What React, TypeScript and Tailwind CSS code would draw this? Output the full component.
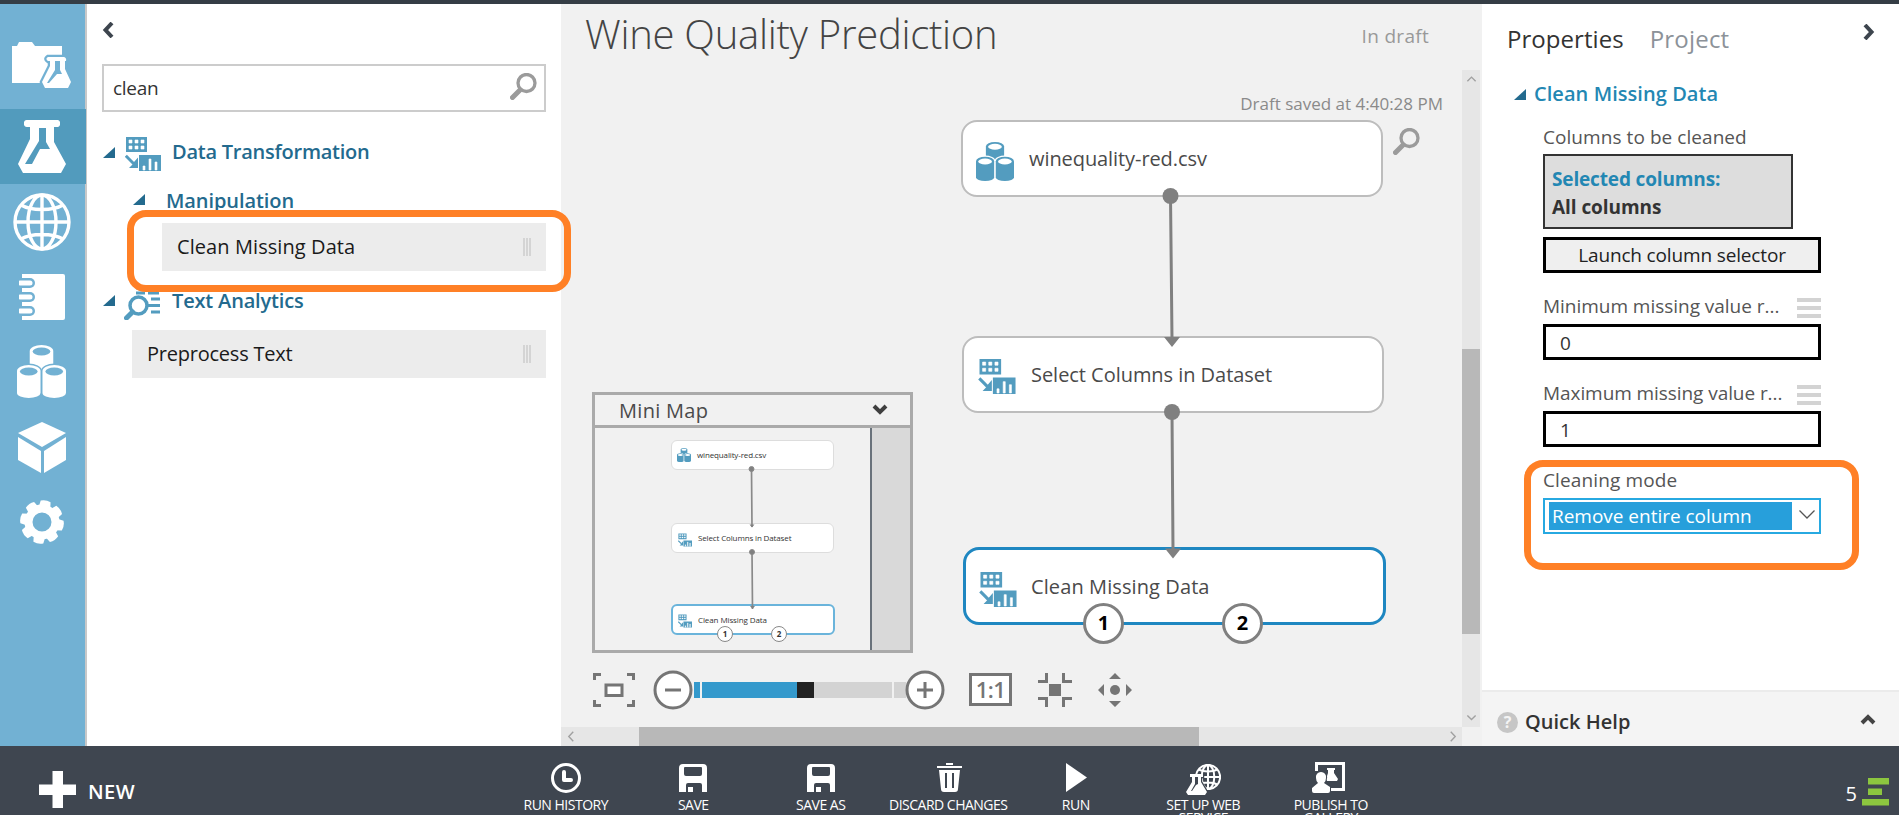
import type { ReactNode } from "react";

type IconProps = { className?: string };

function Flask({ className = "" }: IconProps) {
  return (
    <svg viewBox="0 0 48 53" className={className} fill="currentColor">
      <path
        fillRule="evenodd"
        d="M9 0h31a3 3 0 0 1 2 2v3a3 3 0 0 1-2 2h-4v15l12 22-5 9H5l-5-9 12-25V7H9a3 3 0 0 1-3-2V2a3 3 0 0 1 3-2ZM21 8v13L7 44h7l8-15h10l-4-7V8Z"
      />
    </svg>
  );
}

function FolderFlask() {
  return (
    <svg viewBox="0 0 60 48" className="mb-3 h-12 w-[60px]">
      <path d="M0 4h5l2-4h13l3 4h27v37H0Z" fill="#fff" />
      <path
        d="M35 15h17a3 3 0 0 1 2 4h-1v8l6 13-3 6H33l-3-6 8-16v-5h-2c-3-2-1-4 1-4Z"
        fill="#fff"
        stroke="#72b1d3"
        strokeWidth="4.500"
        paintOrder="stroke"
      />
      <path d="M43 19h5v9l2 4h-5l-8 9h-2l8-13Z" fill="#72b1d3" />
    </svg>
  );
}

function Globe({ className = "", width = 3.4 }: IconProps & { width?: number }) {
  return (
    <svg viewBox="0 0 58 58" className={className} fill="none" stroke="currentColor" strokeWidth={width}>
      <circle cx="29" cy="29" r="27" />
      <ellipse cx="29" cy="29" rx="14" ry="27" />
      <path d="M29 2v54M2 29h54M8 12c10 6 32 6 42 0M8 46c10-6 32-6 42 0" />
    </svg>
  );
}

function Notebook() {
  return (
    <svg viewBox="0 0 46 46" className="h-[46px] w-[46px]">
      <path d="M3 0h41q2 0 2 2v42q0 2-2 2H3Z" fill="#fff" />
      {[9, 23, 37].map((y) => (
        <g key={y}>
          <path d={`M0 ${y}h11`} stroke="#72b1d3" strokeWidth="10" />
          <circle cx="11" cy={y} r="5" fill="#72b1d3" />
          <path d={`M1 ${y}h10`} stroke="#fff" strokeWidth="5" strokeLinecap="round" />
        </g>
      ))}
    </svg>
  );
}

function Cylinders({ className = "", gap = "#fff" }: IconProps & { gap?: string }) {
  const can = (x: number, y: number, h: number) => (
    <g key={`${x}-${y}`}>
      <path
        d={`M${x} ${y + 6}a12 6 0 0 1 24 0v${h}a12 5 0 0 1-24 0Z`}
        fill="currentColor"
        stroke={gap}
        strokeWidth="3"
        paintOrder="stroke"
      />
      <ellipse cx={x + 12} cy={y + 6.5} rx="9" ry="4" fill={gap} />
    </g>
  );
  return (
    <svg viewBox="0 0 50 53" className={className} preserveAspectRatio="none">
      {can(13, 0, 16)}
      {can(0, 20, 22)}
      {can(26, 20, 22)}
    </svg>
  );
}

function Cube() {
  return (
    <svg viewBox="0 0 48 51" className="mt-0.5 h-[51px] w-12" fill="#fff">
      <path d="M24 0 48 11 24 25 0 11Z" />
      <path d="M0 15 23 29v22L0 38Z" />
      <path d="M48 15 26 29v22l22-13Z" />
    </svg>
  );
}

function Gear() {
  return (
    <svg viewBox="-22 -22 44 44" className="h-[44px] w-[44px]" fill="#fff">
      <g transform="rotate(10)">
        {[0, 45, 90, 135, 180, 225, 270, 315].map((a) => (
          <path key={a} transform={`rotate(${a})`} d="M-5-21q5-2 10 0l1 8H-6Z" />
        ))}
      </g>
      <circle r="13.500" fill="none" stroke="#fff" strokeWidth="8" />
    </svg>
  );
}

function TransformIcon({ className = "" }: IconProps) {
  return (
    <svg viewBox="0 0 36 34" className={className}>
      <path d="M1 0h21v15H1ZM14 18h22v16H14Z" fill="#539cbf" />
      <path
        d="M4 3h3v3H4zM10 3h3v3h-3zM16 3h3v3h-3zM4 9h3v3H4zM10 9h3v3h-3zM16 9h3v3h-3zM18 29h2v4h-2zM24 22h2v11h-2zM30 25h2v8h-2z"
        fill="#fff"
        stroke="#fff"
        strokeWidth=".6"
      />
      <path d="M.8 18.8 9 27" stroke="#539cbf" strokeWidth="3" />
      <path d="M13 20.500V31H4l4-4 1-2Z" fill="#539cbf" />
    </svg>
  );
}

function TextIcon() {
  return (
    <svg viewBox="0 0 37 34" className="h-[34px] w-[37px]" fill="none" stroke="#539cbf">
      <path d="M12 7h9M24 7h11M12 2h9M24 2h11" strokeWidth="3" />
      <path d="M27 13h9M24 19.500h12M27 26h9" strokeWidth="3" />
      <circle cx="14.500" cy="19.500" r="8.500" strokeWidth="3.500" />
      <path d="M8.500 26 2.500 32" strokeWidth="5" strokeLinecap="round" />
    </svg>
  );
}

function Magnifier() {
  return (
    <svg viewBox="0 0 27 27" className="h-[27px] w-[27px] shrink-0" fill="none" stroke="#9b9b9b">
      <circle cx="16.500" cy="10" r="8.500" strokeWidth="3.300" />
      <path d="m10 17-7.500 7.500" strokeWidth="5" strokeLinecap="round" />
    </svg>
  );
}

function Chevron({ d, className, width = 4 }: { d: string; className: string; width?: number }) {
  return (
    <svg viewBox="0 0 16 16" className={className} fill="none" stroke="currentColor" strokeWidth={width}>
      <path d={d} />
    </svg>
  );
}
const LEFT = "M12 1 5.500 8 12 15";
const RIGHT = "M4 1l6.500 7L4 15";
const UP = "M2 12l6-6 6 6";
const DOWN = "M2 5l6 6 6-6";

function Caret() {
  return (
    <svg viewBox="0 0 12 11" className="h-[11px] w-3 shrink-0">
      <path d="M12 0v11H0Z" fill="#236a8e" />
    </svg>
  );
}

function Grip() {
  return (
    <div className="flex gap-px">
      <i className="h-[18px] w-0.5 bg-[#d4d4d4]" />
      <i className="h-[18px] w-0.5 bg-[#d4d4d4]" />
      <i className="h-[18px] w-0.5 bg-[#d4d4d4]" />
    </div>
  );
}

function Sidebar() {
  const items: { icon: ReactNode; active?: boolean }[] = [
    { icon: <FolderFlask /> },
    { icon: <Flask className="h-[53px] w-12" />, active: true },
    { icon: <Globe className="h-[58px] w-[58px]" /> },
    { icon: <Notebook /> },
    { icon: <Cylinders className="h-[53px] w-[49px]" gap="#72b1d3" /> },
    { icon: <Cube /> },
    { icon: <Gear /> },
  ];
  return (
    <nav className="flex w-[87px] shrink-0 flex-col border-r-2 border-[#c8c8c8] bg-[#72b1d3] pt-[30px] text-white">
      {items.map((it, i) => (
        <div
          key={i}
          className={
            it.active
              ? "-mr-px flex h-[75px] items-center justify-center bg-[#529bbd] pr-[3px]"
              : "flex h-[75px] items-center justify-center pr-0.5"
          }
        >
          {it.icon}
        </div>
      ))}
    </nav>
  );
}

function ModulePanel() {
  return (
    <aside className="relative flex w-[474px] shrink-0 flex-col bg-white pr-[15px] text-xl">
      <div className="h-[60px] pt-[18px] pl-[13px] text-[#3d454e]">
        <Chevron d={LEFT} className="h-4 w-4" />
      </div>
      <div className="ml-[15px] flex h-12 items-start justify-between border-2 border-[#ccc] pr-[7px] pl-[9px]">
        <span className="text-[19px] leading-[45px] tracking-[-0.28px] text-[#333]">clean</span>
        <span className="pt-[7px]"><Magnifier /></span>
      </div>
      <div className="mt-4 flex h-12 items-center pl-4 font-semibold text-[#236a8e]">
        <Caret />
        <TransformIcon className="mt-1 ml-[10px] h-[34px] w-9" />
        <span className="ml-[11px] tracking-[-0.24px]">Data Transformation</span>
      </div>
      <div className="flex h-[47px] items-center pl-[46px] font-semibold text-[#236a8e]">
        <Caret />
        <span className="mt-0.5 ml-[21px] tracking-[-0.08px]">Manipulation</span>
      </div>
      <div className="ml-[75px] flex h-12 items-center justify-between bg-[#ececec] pr-[15px] pl-[15px] text-[#1a1a1a]">
        <span className="tracking-[0.08px]">Clean Missing Data</span>
        <Grip />
      </div>
      <div className="flex h-[59px] items-center pl-4 font-semibold text-[#236a8e]">
        <Caret />
        <span className="mt-1 ml-[9px]"><TextIcon /></span>
        <span className="ml-[11px] tracking-[-0.17px]">Text Analytics</span>
      </div>
      <div className="ml-[45px] flex h-12 items-center justify-between bg-[#ececec] pr-[15px] pl-[15px] text-[#1a1a1a]">
        <span className="tracking-[-0.23px]">Preprocess Text</span>
        <Grip />
      </div>
      <div className="absolute top-[206px] left-10 z-10 h-[82px] w-[444px] rounded-[19px] border-[7px] border-[#ff8026]" />
    </aside>
  );
}

function Node({
  className,
  icon,
  label,
}: {
  className: string;
  icon: ReactNode;
  label: ReactNode;
}) {
  return (
    <div className={`absolute flex items-center rounded-[16px] bg-white text-xl text-[#4a4a4a] ${className}`}>
      {icon}
      {label}
    </div>
  );
}

function Port({ n, className }: { n: number; className: string }) {
  return (
    <div
      className={`absolute flex h-[41px] w-[41px] items-center justify-center rounded-full border-[3px] border-[#808080] bg-white pb-px text-xl font-bold text-black ${className}`}
    >
      {n}
    </div>
  );
}

function MiniMap() {
  return (
    <div className="absolute top-[388px] left-[31px] flex h-[261px] w-[321px] flex-col border-[3px] border-[#aaa] bg-[#f1f1f1]">
      <div className="flex h-[33px] items-center justify-between border-b-[3px] border-[#aaa] pr-[22px] pl-6">
        <span className="mt-0.5 text-xl tracking-[0.3px] text-[#4a4a4a]">Mini Map</span>
        <Chevron d={DOWN} className="-mt-0.5 h-4 w-4 text-[#3f3f3f]" />
      </div>
      <div className="flex min-h-0 grow">
        <div className="relative grow text-[#333]">
          <div className="absolute top-[12px] left-[76px] flex h-[30px] w-[163px] items-center gap-[6px] rounded-[6px] border border-[#ddd] bg-white pl-[5px] text-[8px]">
            <Cylinders className="h-[14px] w-[14px] text-[#539cbf]" />
            <span className="tracking-[-0.14px]">winequality-red.csv</span>
          </div>
          <div className="absolute top-[95px] left-[76px] flex h-[30px] w-[163px] items-center gap-[6px] rounded-[6px] border border-[#ddd] bg-white pl-[6px] text-[8px]">
            <TransformIcon className="mt-1 h-[14px] w-[14px]" />
            <span className="tracking-[-0.14px]">Select Columns in Dataset</span>
          </div>
          <div className="absolute top-[176px] left-[76px] flex h-[31px] w-[164px] items-center gap-[6px] rounded-[6px] border-2 border-[#6ab4db] bg-white pl-[5px] text-[8px]">
            <TransformIcon className="mt-0.5 h-[14px] w-[14px]" />
            <span className="tracking-[-0.1px]">Clean Missing Data</span>
          </div>
          <svg viewBox="0 0 275 222" className="absolute top-0 left-0 h-[222px] w-[275px]" stroke="#8a8a8a" fill="#808080">
            <path d="M156.500 41 157 99M157 124l.5 57" strokeWidth="1.700" />
            <circle cx="156.500" cy="41" r="2.500" />
            <circle cx="157" cy="124" r="2.500" />
            <path d="M154.500 96.500h5l-2.500 3zM155 178h5l-2.500 3z" stroke="none" />
          </svg>
          <div className="absolute top-[198px] left-[122px] flex h-4 w-4 items-center justify-center rounded-full border border-[#888] bg-white text-[8px] font-bold">1</div>
          <div className="absolute top-[198px] left-[176px] flex h-4 w-4 items-center justify-center rounded-full border border-[#888] bg-white text-[8px] font-bold">2</div>
        </div>
        <div className="w-10 border-l-2 border-[#69727b] bg-[#d9d9d9]" />
      </div>
    </div>
  );
}

function ZoomBar() {
  return (
    <div className="absolute top-[665px] left-[32px] flex h-[41px] items-center text-[#757575]">
      <svg viewBox="0 0 42 34" className="h-[34px] w-[42px]" fill="none" stroke="currentColor" strokeWidth="3">
        <path d="M1.500 7V1.500H8M34 1.500h6.500V7M1.500 27v5.500H8M34 32.500h6.500V27" />
        <path d="M13 12h16v10.500H13Z" fill="#fff" />
      </svg>
      <svg viewBox="0 0 40 40" className="ml-[18px] h-10 w-10" stroke="currentColor" strokeWidth="3">
        <circle cx="20" cy="20" r="18" fill="#fff" />
        <path d="M12 20h16" />
      </svg>
      <div className="ml-px flex h-4 w-[212px]">
        <i className="w-[6px] bg-[#3499cc]" />
        <i className="ml-0.5 w-[95px] bg-[#3499cc]" />
        <i className="w-[17px] bg-[#222]" />
        <i className="w-[78px] bg-[#d3d3d3]" />
        <i className="ml-0.5 w-3 bg-[#d3d3d3]" />
      </div>
      <svg viewBox="0 0 40 40" className="-ml-px h-10 w-10" stroke="currentColor" strokeWidth="3">
        <circle cx="20" cy="20" r="18" fill="#fff" />
        <path d="M12 20h16M20 12v16" />
      </svg>
      <div className="ml-6 flex h-[33px] w-[43px] items-center justify-center border-[3px] border-[#757575] bg-white text-[22px] font-semibold tracking-[-0.5px]">
        <span className="-mt-px">1:1</span>
      </div>
      <svg viewBox="0 0 34 34" className="ml-[26px] h-[34px] w-[34px]" fill="none" stroke="currentColor" strokeWidth="3">
        <path d="M0 8.500h8.500V0M25.500 0v8.500H34M0 25.500h8.500V34M25.500 34v-8.500H34" />
        <path d="M11 11h12v12H11Z" fill="currentColor" stroke="none" />
      </svg>
      <svg viewBox="0 0 34 34" className="ml-[26px] h-[34px] w-[34px]" fill="currentColor">
        <circle cx="17" cy="17" r="5" />
        <path d="M17 0l6 6H11ZM17 34l6-6H11ZM0 17l6-6v12ZM34 17l-6-6v12Z" />
      </svg>
    </div>
  );
}

function Canvas() {
  return (
    <main className="flex w-[921px] shrink-0 flex-col bg-[#f1f1f1]">
      <div className="flex min-h-0 grow">
        <div className="relative w-[901px] shrink-0">
          <div className="flex justify-between pr-[33px] pl-6">
            <h1 className="text-[40px] leading-[60px] font-light tracking-[-0.27px] text-[#444]">
              Wine Quality Prediction
            </h1>
            <span className="pt-[18px] text-[19px] leading-[28px] tracking-[0.3px] text-[#999]">In draft</span>
          </div>
          <p className="pt-[26px] pr-[19px] text-right text-[17px] leading-7 text-[#8a8a8a]">
            Draft saved at 4:40:28 PM
          </p>
          <Node
            className="top-[116px] left-[400px] h-[77px] w-[422px] border-2 border-[#bdbdbd] pl-[13px]"
            icon={<Cylinders className="mt-[5px] h-[39px] w-[38px] text-[#539cbf]" />}
            label={<span className="mt-px ml-[15px] tracking-[-0.08px]">winequality-red.csv</span>}
          />
          <Node
            className="top-[332px] left-[401px] h-[77px] w-[422px] border-2 border-[#bdbdbd] pl-[14px]"
            icon={<TransformIcon className="mt-1 h-[35px] w-[38px]" />}
            label={<span className="mt-px ml-[15px] tracking-[-0.04px]">Select Columns in Dataset</span>}
          />
          <Node
            className="top-[543px] left-[402px] h-[78px] w-[423px] border-[3px] border-[#1f87c1] pl-[13px]"
            icon={<TransformIcon className="mt-[6px] h-[35px] w-[38px]" />}
            label={<span className="mt-0.5 ml-[14px] tracking-[0.1px]">Clean Missing Data</span>}
          />
          <svg viewBox="0 0 901 723" className="absolute top-0 left-0 h-[723px] w-[901px]" fill="#808080">
            <path d="M609.500 192 611 335M611 408l1 138" stroke="#808080" strokeWidth="3" />
            <circle cx="609.500" cy="192" r="8" />
            <circle cx="611" cy="408" r="8" />
            <path d="M603 333h16l-8 10ZM604 544.500h16l-8 10Z" />
          </svg>
          <Port n={1} className="top-[599px] left-[522px]" />
          <Port n={2} className="top-[599px] left-[661px]" />
          <div className="absolute top-[124px] left-[832px]">
            <Magnifier />
          </div>
          <MiniMap />
          <ZoomBar />
        </div>
        <div className="mt-[66px] flex w-[18px] flex-col bg-[#e6e6e6] text-[#a0a0a0]">
          <div className="flex h-[279px] justify-center pt-[3px]">
            <Chevron d={UP} className="h-[11px] w-[11px]" width={2} />
          </div>
          <div className="h-[285px] bg-[#b8b8b8]" />
          <div className="flex grow items-end justify-center pb-[4px]">
            <Chevron d={DOWN} className="h-[11px] w-[11px]" width={2} />
          </div>
        </div>
      </div>
      <div className="flex h-[19px] shrink-0 items-stretch pr-5">
        <div className="flex grow items-center bg-[#e6e6e6] text-[#a0a0a0]">
          <div className="flex w-[78px] pl-1">
            <Chevron d={LEFT} className="h-[11px] w-[11px]" width={2} />
          </div>
          <div className="h-full w-[560px] bg-[#b8b8b8]" />
          <div className="flex grow justify-end pr-[3px]">
            <Chevron d={RIGHT} className="h-[11px] w-[11px]" width={2} />
          </div>
        </div>
      </div>
    </main>
  );
}

function FieldLabel({ children }: { children: ReactNode }) {
  return (
    <div className="flex h-[37px] w-[278px] items-center justify-between text-[19px] text-[#555]">
      {children}
      <div className="mt-1 flex flex-col gap-1">
        <i className="h-1 w-6 bg-[#d3d3d3]" />
        <i className="h-1 w-6 bg-[#d3d3d3]" />
        <i className="h-1 w-6 bg-[#d3d3d3]" />
      </div>
    </div>
  );
}

function Properties() {
  return (
    <aside className="relative flex grow flex-col bg-white">
      <div className="flex pt-[15px] pl-[25px] text-2xl leading-10">
        <span className="tracking-[0.05px] text-[#333]">Properties</span>
        <span className="ml-[26px] tracking-[0.2px] text-[#8c9299]">Project</span>
        <Chevron d={RIGHT} className="mt-[5px] ml-[132px] h-4 w-4 text-[#3d454e]" />
      </div>
      <div className="mt-[17px] flex h-9 items-center pl-8 text-xl font-semibold text-[#2387b3]">
        <Caret />
        <span className="-mt-px ml-2 tracking-[0.06px]">Clean Missing Data</span>
      </div>
      <div className="-mt-0.5 ml-[61px] flex flex-col">
        <span className="pt-[12px] text-[19px] leading-[30px] tracking-[0.06px] text-[#555]">Columns to be cleaned</span>
        <div className="mt-[2px] h-[75px] w-[250px] border-2 border-[#333] bg-[#ddd] pt-[9px] pl-[7px] text-[19px] leading-7 font-bold">
          <div className="tracking-[-0.15px] text-[#2387b3]">Selected columns:</div>
          <div className="tracking-[-0.06px] text-[#333]">All columns</div>
        </div>
        <button className="mt-2 h-9 w-[278px] border-[3px] border-black bg-[#efefef] text-[19px] leading-[30px] tracking-[-0.15px] text-[#222]">
          Launch column selector
        </button>
        <div className="mt-[14px]">
          <FieldLabel>
            <span className="mt-0.5 tracking-[-0.03px]">Minimum missing value r...</span>
          </FieldLabel>
        </div>
        <div className="h-9 w-[278px] border-[3px] border-black pl-[14px] text-[19px] leading-8 text-[#333]">0</div>
        <div className="mt-[14px]">
          <FieldLabel>
            <span className="mt-0.5 tracking-[-0.07px]">Maximum missing value r...</span>
          </FieldLabel>
        </div>
        <div className="h-9 w-[278px] border-[3px] border-black pl-[14px] text-[19px] leading-8 text-[#333]">1</div>
        <span className="mt-[17px] text-[19px] leading-8 tracking-[0.12px] text-[#555]">Cleaning mode</span>
        <div className="mt-0.5 flex h-9 w-[278px] border-2 border-[#27a9e1] bg-white py-[2px] pl-1">
          <div className="w-[243px] bg-[#279fdb] pl-[3px] text-[19px] leading-[29px] tracking-[-0.02px] text-white">
            Remove entire column
          </div>
          <svg viewBox="0 0 16 9" className="mt-[8px] ml-[7px] h-[9px] w-4" fill="none" stroke="#555" strokeWidth="1.300">
            <path d="m.5.5 7.500 7.500L15.500.5" />
          </svg>
        </div>
      </div>
      <div className="absolute top-[456px] left-[42px] h-[110px] w-[335px] rounded-[19px] border-[7px] border-[#ff8026]" />
      <div className="mt-auto flex h-[56px] items-center border-t-2 border-[#ebebeb] bg-[#f4f4f4] pt-0.5 pl-[15px]">
        <span className="mt-1 flex h-[21px] w-[21px] items-center justify-center rounded-full bg-[#c6c6c6] text-base font-bold text-[#f4f4f4]">
          ?
        </span>
        <span className="mt-1 ml-[7px] text-xl font-semibold tracking-[0.02px] text-[#333]">Quick Help</span>
        <Chevron d={UP} className="-mt-0.5 ml-[230px] h-4 w-4 text-[#444]" />
      </div>
    </aside>
  );
}

function SaveIcon() {
  return (
    <svg viewBox="0 0 28 28" className="h-7 w-7">
      <path
        fillRule="evenodd"
        fill="#fff"
        d="M4 0h20q4 0 4 4v24h-5v-7q0-2-2-2H9q-2 0-2 2v7H0V4q0-4 4-4Zm2 3q-1 0-1 1v6q0 2 2 2h14q2 0 2-2V4q0-1-1-1ZM9 23h5v5H9Z"
      />
    </svg>
  );
}

function BottomBar() {
  const actions: { label: ReactNode; icon: ReactNode }[] = [
    {
      label: "RUN HISTORY",
      icon: (
        <svg viewBox="0 0 30 30" className="h-[30px] w-[30px]" fill="none" stroke="#fff">
          <circle cx="15" cy="15" r="13.500" strokeWidth="3" />
          <path d="M13 9v8h7" strokeWidth="4" strokeLinecap="round" strokeLinejoin="round" />
        </svg>
      ),
    },
    { label: "SAVE", icon: <SaveIcon /> },
    { label: "SAVE AS", icon: <SaveIcon /> },
    {
      label: "DISCARD CHANGES",
      icon: (
        <svg viewBox="0 0 25 29" className="ml-0.5 h-[29px] w-[25px]" fill="#fff">
          <path d="M9 0h7v2H9ZM0 3h25v2H0Z" />
          <path fillRule="evenodd" d="M2 7h21l-2 19q0 3-3 3H7q-3 0-3-3Zm6 3v15h2V10Zm7 0v15h2V10Z" />
        </svg>
      ),
    },
    {
      label: "RUN",
      icon: (
        <svg viewBox="0 0 21 29" className="ml-0.5 h-[29px] w-[21px]" fill="#fff">
          <path d="M0 0l21 14.500L0 29Z" />
        </svg>
      ),
    },
    {
      label: <>SET UP WEB<br />SERVICE</>,
      icon: (
        <div className="relative mt-[3px] h-[31px] w-[35px]">
          <Globe className="absolute top-0 right-0 h-[26px] w-[26px]" width={4.5} />
          <svg viewBox="0 0 21 21" className="absolute bottom-0 left-0 h-[21px] w-[21px]">
            <path
              d="M4 0h13v3h-2v5l6 10-2 3H2l-2-3L6 8V3H4Z"
              fill="#fff"
              stroke="#3f4650"
              strokeWidth="2.500"
              paintOrder="stroke"
            />
            <path d="M9 3h3v7l-2 1-4 6H5l4-7Z" fill="#3f4650" />
          </svg>
        </div>
      ),
    },
    {
      label: <>PUBLISH TO<br />GALLERY</>,
      icon: (
        <svg viewBox="0 0 33 31" className="mr-1 h-[31px] w-[33px]">
          <path d="M4.500 9V1.500h27v26H19" fill="none" stroke="#fff" strokeWidth="3" />
          <path d="M15 6h8v2h-1v3l4 6-1 2H15l-1-2 2-6V8h-1Z" fill="#fff" />
          <path
            d="M9 10a5 5 0 0 1 5 6q0 3-2 5l6 4v4q0 2-2 2H2q-2 0-2-2v-3l6-5q-2-2-2-5a5 5 0 0 1 5-6Z"
            fill="#fff"
            stroke="#3f4650"
            strokeWidth="2"
            paintOrder="stroke"
          />
        </svg>
      ),
    },
  ];
  return (
    <footer className="flex h-[69px] shrink-0 overflow-hidden bg-[#3f4650] text-white">
      <div className="flex w-[502px] shrink-0 items-start pt-[25px] pl-[39px]">
        <svg viewBox="0 0 37 37" className="h-[37px] w-[37px]" fill="#fff">
          <path d="M13.500 0h10.500v13.500H37V24H24v13H13.500V24H0V13.500h13.500Z" />
        </svg>
        <span className="mt-1 ml-[12px] text-xl leading-[34px] font-semibold tracking-[0.4px]">NEW</span>
      </div>
      {actions.map((a, i) => (
        <div key={i} className="flex w-[127.500px] shrink-0 flex-col items-center pt-4">
          <div className="flex h-[31px] shrink-0 items-center justify-center">{a.icon}</div>
          <span className="mt-[5px] text-center text-sm leading-[13px] tracking-[-0.5px] whitespace-nowrap">{a.label}</span>
        </div>
      ))}
      <div className="ml-auto flex items-start pr-[10px]">
        <span className="mt-[31px] text-xl leading-[34px]">5</span>
        <svg viewBox="0 0 27 28" className="mt-[32px] ml-[5px] h-7 w-[27px]" fill="#8cc63f">
          <path d="M6 0h21v6.500H6ZM6 10.500h14v6.500H6ZM0 21h27v6.500H0Z" />
        </svg>
      </div>
    </footer>
  );
}

export default function App() {
  return (
    <div className="flex h-[815px] w-[1899px] flex-col overflow-hidden bg-white font-['Open_Sans','Noto_Sans',sans-serif]">
      <div className="h-1 shrink-0 bg-[#353d45]" />
      <div className="flex min-h-0 grow">
        <Sidebar />
        <ModulePanel />
        <Canvas />
        <Properties />
      </div>
      <BottomBar />
    </div>
  );
}
